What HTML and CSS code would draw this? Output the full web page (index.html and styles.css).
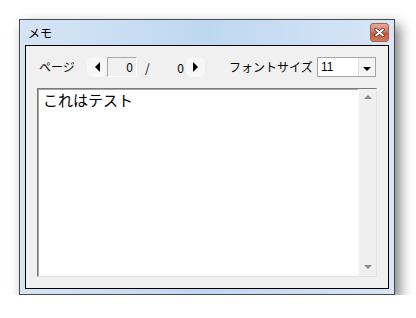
FILE: index.html
```html
<!DOCTYPE html>
<html>
<head>
    <meta http-equiv="Content-Type" content="text/html; charset=utf-8">
    <title>メモ</title>
    <link rel="stylesheet" href="styles.css">
</head>
<body>
    <div class="window">
        <div class="titlebar">
            <span class="title">メモ</span>
            <div class="close">
                <svg width="11" height="9" viewBox="0 0 11 9">
                    <path d="M2 1.5 L9 7.5 M9 1.5 L2 7.5" stroke="#4a3a36" stroke-width="3.4" stroke-linecap="round"/>
                    <path d="M2 1.5 L9 7.5 M9 1.5 L2 7.5" stroke="#ffffff" stroke-width="1.8" stroke-linecap="round"/>
                </svg>
            </div>
        </div>
        <div class="client">
            <div class="toolbar">
                <span class="label page-label">ページ</span>
                <div class="arrow-btn prev"><span class="tri-left"></span></div>
                <div class="page-box">0</div>
                <span class="slash">/</span>
                <span class="page-total">0</span>
                <div class="arrow-btn next"><span class="tri-right"></span></div>
                <span class="label font-label">フォントサイズ</span>
                <div class="combo">
                    <span class="combo-value">11</span>
                    <div class="combo-btn"><span class="tri-down"></span></div>
                </div>
            </div>
            <div class="memo">
                <div class="memo-text">これはテスト</div>
                <div class="scrollbar">
                    <span class="sb-up"></span>
                    <span class="sb-down"></span>
                </div>
            </div>
        </div>
    </div>
</body>
</html>
```
FILE: styles.css
```css
body {
    margin: 0;
    padding: 19px 0 0 19px;
    background-color: #ffffff;
    font-family: "Noto Sans CJK JP", "Noto Sans", sans-serif;
    font-size: 12px;
    color: #000;
}
.window {
    width: 376px;
    height: 276px;
    box-sizing: border-box;
    border: 1px solid #4a4a4a;
    padding: 0 5px 5px 5px;
    display: flex;
    flex-direction: column;
    background: linear-gradient(to right, #d6e5f5 0%, #bed7f1 50%, #d8e6f6 100%);
    box-shadow: 5px 6px 12px rgba(0, 0, 0, 0.5);
}
.titlebar {
    height: 25px;
    display: flex;
    align-items: center;
    justify-content: space-between;
}
.title {
    padding-left: 3px;
    line-height: 1;
}
.close {
    width: 19px;
    height: 19px;
    box-sizing: border-box;
    border: 1px solid #a56050;
    border-radius: 3px;
    background: linear-gradient(to bottom, #e6ab9b 0%, #d47860 45%, #c5563b 55%, #d37a5c 100%);
    display: flex;
    align-items: center;
    justify-content: center;
}
.client {
    flex: 1;
    border: 1px solid #000;
    background-color: #f0f0f0;
    padding: 11px;
    display: flex;
    flex-direction: column;
}
.toolbar {
    height: 20px;
    display: flex;
    align-items: center;
}
.label {
    line-height: 20px;
}
.page-label {
    margin-left: 2px;
    width: 48px;
}
.arrow-btn {
    width: 19px;
    height: 20px;
    background-color: #f7f7f7;
    border-radius: 6px;
    display: flex;
    align-items: center;
    justify-content: center;
}
.prev {
    margin-right: 1px;
}
.tri-left {
    width: 0;
    height: 0;
    border-top: 5px solid transparent;
    border-bottom: 5px solid transparent;
    border-right: 5px solid #000;
    margin-left: 1px;
}
.tri-right {
    width: 0;
    height: 0;
    border-top: 5px solid transparent;
    border-bottom: 5px solid transparent;
    border-left: 5px solid #000;
    margin-right: 1px;
}
.page-box {
    width: 30px;
    height: 20px;
    box-sizing: border-box;
    border: 1px solid;
    border-color: #a8a8a8 #ffffff #ffffff #a8a8a8;
    text-align: right;
    padding-right: 3px;
    line-height: 18px;
}
.slash {
    margin-left: 8px;
    width: 6px;
}
.page-total {
    width: 33px;
    text-align: right;
    padding-right: 1px;
}
.next {
    margin-left: 1px;
}
.font-label {
    margin-left: 24px;
    width: 88px;
}
.combo {
    width: 59px;
    height: 20px;
    box-sizing: border-box;
    border: 1px solid #a5a5a5;
    background-color: #fff;
    display: flex;
    align-items: center;
    justify-content: space-between;
}
.combo-value {
    padding-left: 3px;
    font-family: "Liberation Sans", sans-serif;
    font-size: 12px;
}
.combo-btn {
    width: 17px;
    height: 18px;
    box-sizing: border-box;
    border-left: 1px solid #e2e2e2;
    background-color: #f4f4f4;
    display: flex;
    align-items: center;
    justify-content: center;
}
.tri-down {
    width: 0;
    height: 0;
    border-left: 4px solid transparent;
    border-right: 4px solid transparent;
    border-top: 4px solid #000;
    margin-top: 3px;
}
.memo {
    margin-top: 11px;
    flex: 1;
    box-sizing: border-box;
    border: 1px solid;
    border-color: #7a7a7a #e3e3e3 #e3e3e3 #7a7a7a;
    box-shadow: inset 1px 1px 0 #a6a6a6;
    background-color: #fff;
    display: flex;
}
.memo-text {
    flex: 1;
    padding: 1px 0 0 5px;
    font-size: 15px;
    line-height: 20px;
}
.scrollbar {
    width: 17px;
    background-color: #efefef;
    border-left: 1px solid #f8f8f8;
    display: flex;
    flex-direction: column;
    justify-content: space-between;
    align-items: center;
    padding: 6px 0 7px 0;
}
.sb-up {
    width: 0;
    height: 0;
    border-left: 4px solid transparent;
    border-right: 4px solid transparent;
    border-bottom: 4px solid #8a8a8a;
}
.sb-down {
    width: 0;
    height: 0;
    border-left: 4px solid transparent;
    border-right: 4px solid transparent;
    border-top: 4px solid #8a8a8a;
}
```
